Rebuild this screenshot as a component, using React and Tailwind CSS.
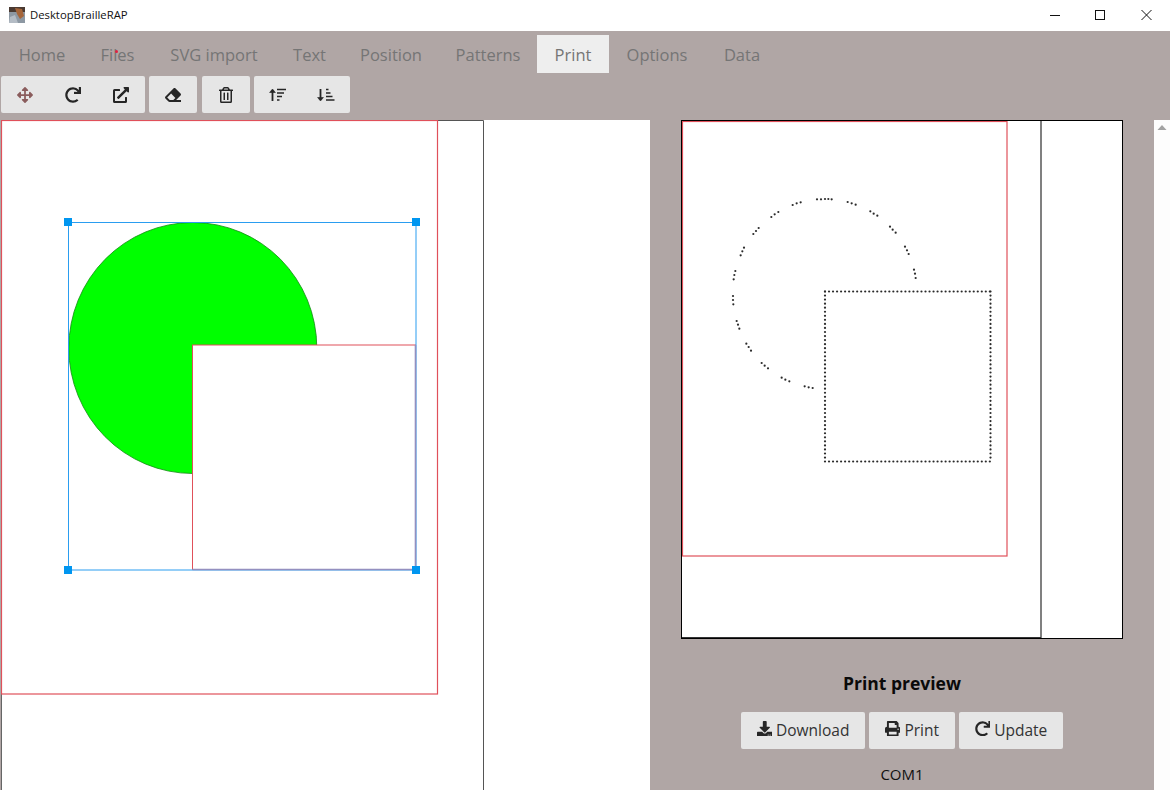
import { FaArrowsAlt, FaRedo, FaExternalLinkAlt, FaEraser, FaRegTrashAlt, FaDownload, FaPrint } from "react-icons/fa";

const TABS = [
  { label: "Home", width: "w-[82px]" },
  { label: "Files", width: "w-[69px]" },
  { label: "SVG import", width: "w-[124px]" },
  { label: "Text", width: "w-[67px]" },
  { label: "Position", width: "w-[96px]" },
  { label: "Patterns", width: "w-[98px]" },
  { label: "Print", width: "w-[72px]" },
  { label: "Options", width: "w-[96px]" },
  { label: "Data", width: "w-[74px]" },
];

// dots of the arc in the preview, as measured
const ARC_DOTS = [
  [291, 28], [303, 28], [315, 27], [325, 27], [335, 28],
  [383, 36], [395, 40], [407, 44], [451, 64], [461, 71], [472, 77],
  [510, 110], [518, 119], [527, 128], [555, 170], [561, 181], [566, 192],
  [582, 239], [585, 251], [587, 264], [242, 37], [230, 40], [218, 45],
  [175, 66], [164, 73], [154, 81], [116, 114], [108, 123], [100, 132],
  [72, 173], [67, 184], [62, 196], [46, 243], [43, 255], [41, 268],
  [39, 318], [39, 330], [40, 343], [50, 393], [54, 404], [58, 416],
  [79, 461], [86, 471], [93, 482], [125, 519], [134, 527], [144, 535],
  [185, 563], [196, 569], [208, 574], [254, 589], [266, 592], [278, 594],
];

function squareDots() {
  const dots = [];
  for (let x = 825; x <= 990; x += 4.02) {
    dots.push([x, 291.5], [x, 461.5]);
  }
  for (let y = 291.5; y <= 461.5; y += 4.05) {
    dots.push([825, y], [990.5, y]);
  }
  return dots;
}

function ToolButton({ children, color = "text-[#262626]" }) {
  return (
    <button className={`w-[48px] h-[37px] bg-[#e6e6e6] flex items-center justify-center text-[16px] ${color}`}>
      {children}
    </button>
  );
}

function ActionButton({ icon, label, width }) {
  return (
    <button className={`h-[37px] ${width} bg-[#e6e6e6] rounded-[2px] flex items-center justify-center gap-[4px] pt-[1px] text-[15.5px] text-[#333333]`}>
      <span className="mb-[5px] text-[#262626]">{icon}</span>
      {label}
    </button>
  );
}

function SortUpIcon() {
  return (
    <svg width="18" height="14" viewBox="0 0 18 14" fill="none" stroke="#262626">
      <path d="M3.5 13 V2" strokeWidth="1.8" />
      <path d="M0.6 4.5 L3.5 1 L6.4 4.5 Z" fill="#262626" strokeWidth="0.6" />
      <path d="M8 1.5 H17 M8 5 H15 M8 8.5 H13 M8 12 H10.5" strokeWidth="1.3" />
    </svg>
  );
}

function SortDownIcon() {
  return (
    <svg width="18" height="14" viewBox="0 0 18 14" fill="none" stroke="#262626">
      <path d="M3.5 1 V12" strokeWidth="1.8" />
      <path d="M0.6 9.5 L3.5 13 L6.4 9.5 Z" fill="#262626" strokeWidth="0.6" />
      <path d="M9 1.5 H11.5 M9 5 H13.5 M9 8.5 H15.5 M9 12 H17.5" strokeWidth="1.3" />
    </svg>
  );
}

function Handle({ x, y }) {
  return <rect x={x - 4} y={y - 4} width="8" height="8" fill="#0096f0" />;
}

export default function App() {
  return (
    <div className="w-[1170px] h-[790px] overflow-hidden flex flex-col bg-white font-['Open_Sans',sans-serif]">
      {/* title bar */}
      <div className="h-[31px] shrink-0 flex items-center bg-white pl-[9px]">
        <svg width="16" height="16" viewBox="0 0 16 16" className="mr-[5px] mb-[1px]">
          <rect width="16" height="16" fill="#8d98a3" />
          <rect width="16" height="5" fill="#4a3a32" />
          <path d="M6 1 L13 2 L15 9 L11 12 L8 7 Z" fill="#a5653a" />
          <path d="M1 10 L6 8 L9 16 L0 16 Z" fill="#b4bcc5" />
        </svg>
        <span className="text-[11.3px] text-[#111111]">DesktopBrailleRAP</span>
        <div className="ml-auto flex items-center">
          <svg width="46" height="31" viewBox="0 0 46 31"><path d="M18 15.5 H28" stroke="#111" /></svg>
          <svg width="46" height="31" viewBox="0 0 46 31"><rect x="17.5" y="10.5" width="9" height="9" fill="none" stroke="#111" /></svg>
          <svg width="46" height="31" viewBox="0 0 46 31"><path d="M17.5 10 L27.5 20 M27.5 10 L17.5 20" stroke="#111" /></svg>
        </div>
      </div>

      <div className="flex-1 min-h-0 flex flex-col bg-[#b0a6a5] pl-[1px]">
        {/* menu tabs */}
        <div className="h-[38px] mt-[4px] shrink-0 flex">
          {TABS.map((tab) => (
            <div
              key={tab.label}
              className={`relative flex items-center justify-center pt-[2px] text-[16.5px] text-[#757575] ${tab.width} ${tab.label === "Print" ? "bg-[#eeeeee]" : ""}`}
            >
              {tab.label}
              {tab.label === "Files" && <span className="absolute left-[32px] top-[15px] w-[3px] h-[3px] rounded-full bg-[#e02040]" />}
            </div>
          ))}
        </div>

        {/* toolbar */}
        <div className="h-[37px] mt-[3px] shrink-0 flex gap-[4px]">
          <div className="flex rounded-[2px] overflow-hidden">
            <ToolButton color="text-[#8a5c5c]"><FaArrowsAlt /></ToolButton>
            <ToolButton><FaRedo /></ToolButton>
            <ToolButton><FaExternalLinkAlt /></ToolButton>
          </div>
          <div className="flex rounded-[2px] overflow-hidden">
            <ToolButton><FaEraser /></ToolButton>
          </div>
          <div className="flex rounded-[2px] overflow-hidden ml-[1px]">
            <ToolButton><FaRegTrashAlt /></ToolButton>
          </div>
          <div className="flex rounded-[2px] overflow-hidden">
            <ToolButton><SortUpIcon /></ToolButton>
            <ToolButton><SortDownIcon /></ToolButton>
          </div>
        </div>

        <div className="flex-1 min-h-0 mt-[7px] flex">
          {/* drawing canvas */}
          <div className="w-[649px] shrink-0 bg-white">
            <svg width="649" height="670" viewBox="1 120 649 670">
              <path d="M1.5 120 V790" stroke="#666666" />
              <path d="M437 120.5 H483.5 V790" fill="none" stroke="#555555" />
              <rect x="1.5" y="120.5" width="436" height="573.5" fill="none" stroke="#e0505a" strokeWidth="1.2" />
              <ellipse cx="192.8" cy="348" rx="124" ry="125.5" fill="#00ff00" stroke="#128a12" strokeWidth="0.8" />
              <rect x="192.5" y="345" width="223" height="224.5" fill="#ffffff" stroke="#e0505a" />
              <rect x="68.5" y="222.5" width="347.5" height="347.5" fill="none" stroke="#2a9df0" />
              <path d="M192.5 569.5 H415.5 V345" fill="none" stroke="#9490c0" strokeWidth="1.6" />
              <Handle x={68} y={222} />
              <Handle x={416} y={222} />
              <Handle x={68} y={570} />
              <Handle x={416} y={570} />
            </svg>
          </div>

          {/* print preview */}
          <div className="w-[504px] shrink-0 flex flex-col items-center">
            <div className="w-[442px] h-[519px] shrink-0 bg-white border border-black">
              <svg width="440" height="517" viewBox="682 121 440 517">
                <rect x="682.5" y="121.5" width="324.5" height="434.5" fill="none" stroke="#e0505a" strokeWidth="1.2" />
                <path d="M1041 121 V638" stroke="#808080" strokeWidth="2" />
                <path d="M682 637.5 H1041" stroke="#333333" />
                {ARC_DOTS.map(([x, y], i) => (
                  <circle key={i} cx={720 + x / 3} cy={190 + y / 3} r="1.1" fill="#2a2a2a" />
                ))}
                {squareDots().map(([x, y], i) => (
                  <circle key={i} cx={x} cy={y} r="1.1" fill="#2a2a2a" />
                ))}
              </svg>
            </div>
            <div className="mt-[31px] text-[17.5px] leading-[26px] font-bold text-[#0a0a0a]">Print preview</div>
            <div className="mt-[16px] flex gap-[4px]">
              <ActionButton icon={<FaDownload />} label="Download" width="w-[124px]" />
              <ActionButton icon={<FaPrint />} label="Print" width="w-[86px]" />
              <ActionButton icon={<FaRedo />} label="Update" width="w-[104px]" />
            </div>
            <div className="mt-[14px] text-[15px] leading-[22px] text-[#111111]">COM1</div>
          </div>

          {/* scrollbar */}
          <div className="w-[16px] shrink-0 bg-[#fdfdfd] flex justify-center pt-[4px]">
            <svg width="10" height="8" viewBox="0 0 10 8"><path d="M5 1 L9.5 6 H0.5 Z" fill="#a3a3a3" /></svg>
          </div>
        </div>
      </div>
    </div>
  );
}
